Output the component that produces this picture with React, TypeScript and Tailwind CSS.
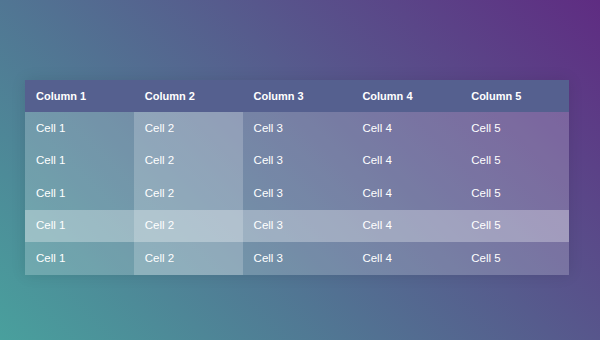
import React from "react";

const columns = ["Column 1", "Column 2", "Column 3", "Column 4", "Column 5"];
const rows = [1, 2, 3, 4, 5];

const App: React.FC = () => {
  return (
    <div
      className="w-[600px] h-[340px] overflow-hidden bg-[linear-gradient(45deg,#49a09d,#5f2c82)] pt-[80px] pl-[25px]"
      style={{ fontFamily: '"Liberation Sans", Arial, sans-serif' }}
    >
      <div className="w-[544px] overflow-hidden shadow-[0_0_14px_rgba(0,0,0,0.1)] text-white">
        {/* Header */}
        <div className="grid grid-cols-5 h-[32px] bg-[#55608f]">
          {columns.map((c) => (
            <div key={c} className="flex items-center pl-[11px] text-[11px] font-bold">
              {c}
            </div>
          ))}
        </div>

        {/* Body */}
        {rows.map((r) => (
          <div
            key={r}
            className={`grid grid-cols-5 h-[32.5px] ${r === 4 ? "bg-white/30" : ""}`}
          >
            {[1, 2, 3, 4, 5].map((c) => (
              <div
                key={c}
                className={`flex items-center pl-[11px] text-[11.5px] ${
                  c === 2 ? "bg-white/[0.36]" : "bg-white/20"
                }`}
              >
                Cell {c}
              </div>
            ))}
          </div>
        ))}
      </div>
    </div>
  );
};

export default App;
